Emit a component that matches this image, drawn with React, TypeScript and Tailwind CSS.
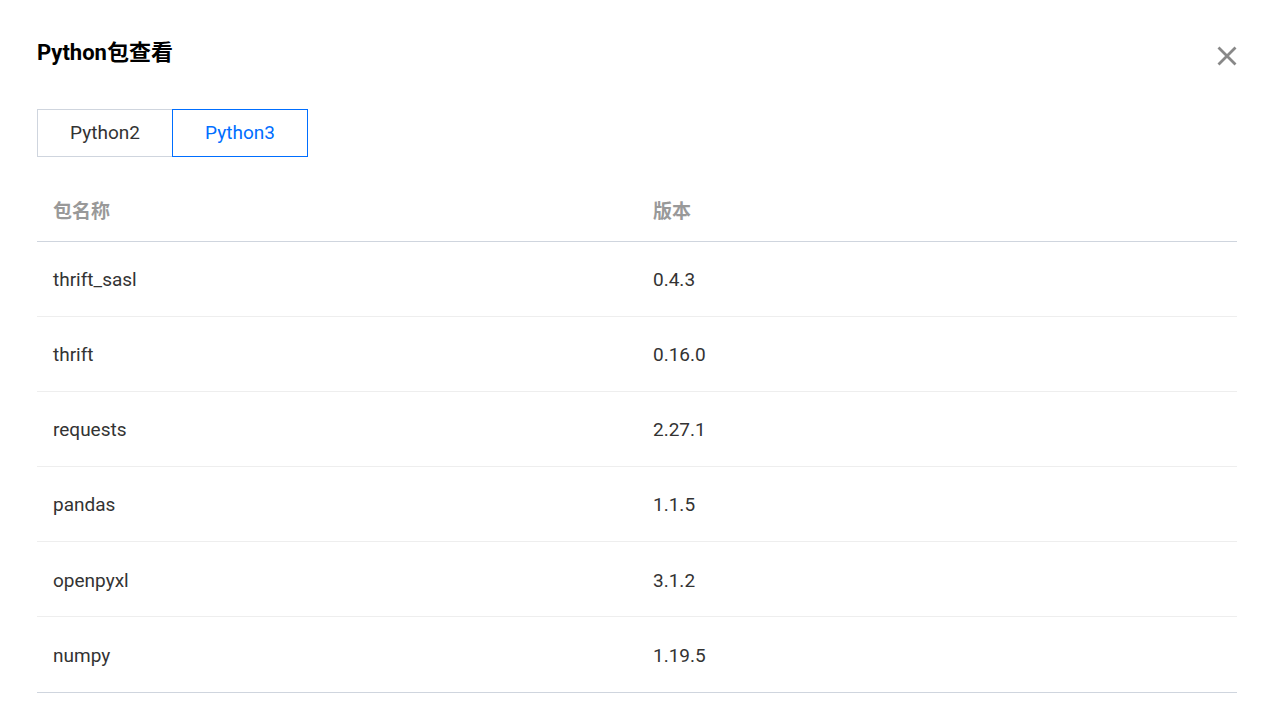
const rows = [
  { name: "thrift_sasl", version: "0.4.3" },
  { name: "thrift", version: "0.16.0" },
  { name: "requests", version: "2.27.1" },
  { name: "pandas", version: "1.1.5" },
  { name: "openpyxl", version: "3.1.2" },
  { name: "numpy", version: "1.19.5" },
];

export default function App() {
  return (
    <div
      className="min-h-screen bg-white px-[37px] pt-[38px] text-[#333]"
      style={{ fontFamily: 'Roboto, "Noto Sans CJK SC", sans-serif' }}
    >
      <div className="flex items-start justify-between">
        <h1 className="text-[22px] font-bold leading-[30px] text-black">Python包查看</h1>
        <button className="mt-[8px] text-[#888]">
          <svg width="20" height="20" viewBox="0 0 20 20" fill="none" stroke="currentColor" strokeWidth="2.8">
            <path d="M1.5 1.5 L18.5 18.5 M18.5 1.5 L1.5 18.5" />
          </svg>
        </button>
      </div>

      <div className="mt-[41px] flex">
        <div className="flex h-[48px] w-[135px] items-center justify-center border border-r-0 border-[#cfd5de] text-[19px] text-[#333]">
          Python2
        </div>
        <div className="flex h-[48px] w-[136px] items-center justify-center border border-[#006eff] text-[19px] text-[#006eff]">
          Python3
        </div>
      </div>

      <table className="mt-[27px] w-full border-collapse text-[19px]">
        <thead>
          <tr className="border-b border-[#cfd5de]">
            <th className="h-[57px] w-1/2 px-[16px] text-left font-bold text-[#999]">包名称</th>
            <th className="h-[57px] w-1/2 px-[16px] text-left font-bold text-[#999]">版本</th>
          </tr>
        </thead>
        <tbody>
          {rows.map((r, i) => (
            <tr
              key={r.name}
              className={i === rows.length - 1 ? "border-b border-[#cfd5de]" : "border-b border-[#eeeeee]"}
            >
              <td className="h-[75.2px] px-[16px] pt-[3px]">{r.name}</td>
              <td className="h-[75.2px] px-[16px] pt-[3px]">{r.version}</td>
            </tr>
          ))}
        </tbody>
      </table>
    </div>
  );
}
